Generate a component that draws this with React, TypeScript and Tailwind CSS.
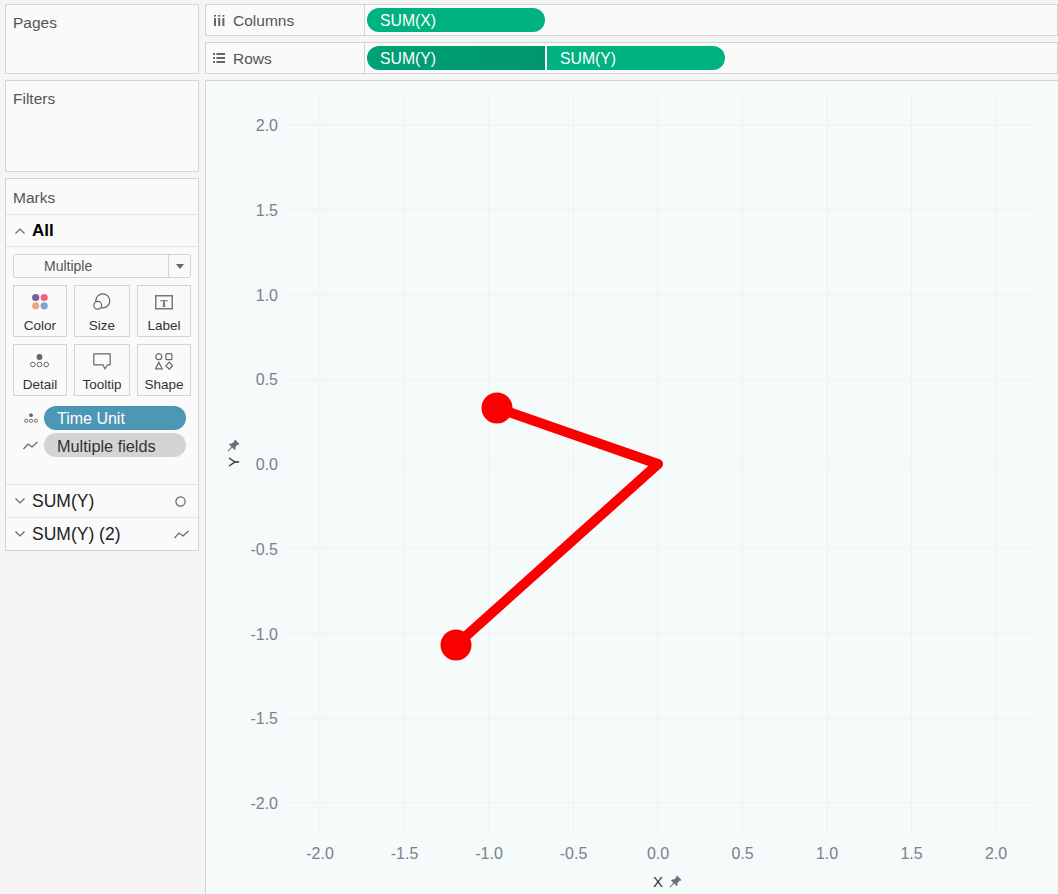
const font = "font-['Liberation_Sans',Arial,sans-serif]"

const xTicks = [-2, -1.5, -1, -0.5, 0, 0.5, 1, 1.5, 2]
const yTicks = [2, 1.5, 1, 0.5, 0, -0.5, -1, -1.5, -2]

function px(v: number) {
  return 658 + v * 169 - 206
}
function py(v: number) {
  return 464 - v * 169.5 - 81
}

function Pin({ className }: { className?: string }) {
  return (
    <svg className={className} width="13" height="13" viewBox="0 0 13 13">
      <path d="M8 0.5 L12.5 5 L11.6 5.8 L10.8 5.5 L8.4 8 L8.6 10.2 L7.6 11 L5.2 8.6 L1.2 12.4 L0.6 11.8 L4.4 7.8 L2 5.4 L2.8 4.4 L5 4.6 L7.5 2.2 L7.2 1.4 Z" fill="#68707c" />
    </svg>
  )
}

function Chevron({ up }: { up?: boolean }) {
  return (
    <svg width="10" height="6" viewBox="0 0 10 6" fill="none" stroke="#666" strokeWidth="1.2">
      <path d={up ? 'M0.5 5.5 L5 1 L9.5 5.5' : 'M0.5 0.5 L5 5 L9.5 0.5'} />
    </svg>
  )
}

function LineGlyph() {
  return (
    <svg width="15" height="9" viewBox="0 0 15 9" fill="none" stroke="#666" strokeWidth="1.2">
      <path d="M0.5 8 L5 3 L9 6 L14.5 1" />
    </svg>
  )
}

function MarkCard({ label, children }: { label: string; children: React.ReactNode }) {
  return (
    <div className="flex h-[52px] flex-col items-center border border-[#d4d4d4] bg-[#fafafa]">
      <div className="flex h-[29px] items-start justify-center pt-[7px]">{children}</div>
      <span className="mt-[3px] text-[13.5px] leading-[16px] text-[#333]">{label}</span>
    </div>
  )
}

function Shelf({ icon, label, children }: { icon: React.ReactNode; label: string; children: React.ReactNode }) {
  return (
    <div className="flex h-8 border border-[#d4d4d4] bg-[#fafafa]">
      <div className="flex w-[159px] items-center border-r border-[#d4d4d4]">
        <div className="flex w-[27px] justify-center pr-[1px]">{icon}</div>
        <span className="pt-[2px] text-[15.5px] text-[#555]">{label}</span>
      </div>
      <div className="flex items-center gap-[2px] pl-[2px]">{children}</div>
    </div>
  )
}

export default function App() {
  return (
    <div className={'flex h-[894px] w-[1058px] gap-[6px] overflow-hidden bg-[#f5f5f5] pl-[5px] pt-1 ' + font}>
      <div className="flex w-[194px] shrink-0 flex-col gap-[6px]">
        <div className="h-[70px] border border-[#d4d4d4] bg-[#fafafa] px-[7px] py-[9px] text-[15.5px] leading-[18px] text-[#555]">
          Pages
        </div>
        <div className="h-[92px] border border-[#d4d4d4] bg-[#fafafa] px-[7px] py-[9px] text-[15.5px] leading-[18px] text-[#555]">
          Filters
        </div>
        <div className="h-[373px] border border-[#d4d4d4] bg-[#fafafa]">
          <div className="flex h-[36px] items-center border-b border-[#e6e6e6] px-[7px] pt-[2px] text-[15.5px] text-[#555]">
            Marks
          </div>
          <div className="flex h-8 items-center border-b border-[#e6e6e6] pl-[9px]">
            <Chevron up />
            <span className="ml-[7px] text-[17px] font-bold text-black">All</span>
          </div>
          <div className="px-[7px] pt-[7px]">
            <div className="flex h-6 rounded-[2px] border border-[#d4d4d4] bg-[#fafafa]">
              <span className="flex-1 pl-[30px] text-[14px] leading-[22px] text-[#555]">Multiple</span>
              <div className="flex w-[22px] items-center justify-center border-l border-[#d4d4d4]">
                <div className="h-0 w-0 border-x-[4.5px] border-t-[5px] border-x-transparent border-t-[#666]" />
              </div>
            </div>
            <div className="mt-[7px] grid grid-cols-[54px_56px_54px] justify-between gap-y-[7px]">
              <MarkCard label="Color">
                <svg width="20" height="18" viewBox="0 0 20 18">
                  <circle cx="5.7" cy="4.5" r="3.6" fill="#7b5f96" />
                  <circle cx="14.2" cy="4.5" r="3.6" fill="#f1657f" />
                  <circle cx="5.7" cy="12.8" r="3.6" fill="#f2a57b" />
                  <circle cx="14.2" cy="12.8" r="3.6" fill="#7ba5d0" />
                </svg>
              </MarkCard>
              <MarkCard label="Size">
                <svg width="20" height="18" viewBox="0 0 20 18" fill="none" stroke="#666" strokeWidth="1.2">
                  <circle cx="10.8" cy="7.8" r="7" />
                  <circle cx="5.7" cy="12.2" r="3.9" fill="#fafafa" />
                </svg>
              </MarkCard>
              <MarkCard label="Label">
                <svg width="18" height="18" viewBox="0 0 18 18" fill="none">
                  <rect x="0.75" y="2.75" width="16.5" height="13" stroke="#777" strokeWidth="1.5" />
                  <text x="9" y="13.5" textAnchor="middle" fontSize="11" fontWeight="700" fontFamily="'Liberation Serif', serif" fill="#666">T</text>
                </svg>
              </MarkCard>
              <MarkCard label="Detail">
                <svg width="20" height="18" viewBox="0 0 20 18" fill="none" stroke="#666" strokeWidth="1">
                  <circle cx="9.5" cy="5" r="2.9" fill="#666" stroke="none" />
                  <circle cx="2.9" cy="12.5" r="2.3" />
                  <circle cx="9.5" cy="12.5" r="2.3" />
                  <circle cx="16.2" cy="12.5" r="2.3" />
                </svg>
              </MarkCard>
              <MarkCard label="Tooltip">
                <svg width="20" height="18" viewBox="0 0 20 18" fill="none" stroke="#666" strokeWidth="1.2">
                  <path d="M1.8 1.8 H18.2 V12.8 H15.5 L13 17 L11 12.8 H1.8 Z" strokeLinejoin="round" />
                </svg>
              </MarkCard>
              <MarkCard label="Shape">
                <svg width="18" height="18" viewBox="0 0 18 18" fill="none" stroke="#666" strokeWidth="1.2">
                  <circle cx="3.8" cy="4.7" r="3" />
                  <rect x="10.9" y="1.7" width="6" height="6" rx="1" />
                  <path d="M3.8 10.4 L7.2 16.8 H0.5 Z" />
                  <path d="M14.2 10.2 L17.6 13.7 L14.2 17.2 L10.8 13.7 Z" />
                </svg>
              </MarkCard>
            </div>
            <div className="mt-[10px] flex items-center">
              <div className="flex w-[31px] justify-center pl-[4px]">
                <svg width="14" height="10" viewBox="0 0 20 14" fill="none" stroke="#666" strokeWidth="1.3">
                  <circle cx="10" cy="3" r="2.7" fill="#666" stroke="none" />
                  <circle cx="3" cy="11" r="2.3" />
                  <circle cx="10" cy="11" r="2.3" />
                  <circle cx="17" cy="11" r="2.3" />
                </svg>
              </div>
              <div className="flex h-6 w-[142px] items-center rounded-full bg-[#4b97b4] pl-[13px] pt-[2px] text-[16px] text-white">
                Time Unit
              </div>
            </div>
            <div className="mt-[3px] flex items-center">
              <div className="flex w-[31px] justify-center pl-[4px]">
                <LineGlyph />
              </div>
              <div className="flex h-6 w-[142px] items-center rounded-full bg-[#d4d4d4] pl-[13px] pt-[2px] text-[16.3px] text-[#333]">
                Multiple fields
              </div>
            </div>
          </div>
          <div className="mt-[27px] flex h-[34px] items-center border-y border-[#e6e6e6] pl-[9px] pr-[12px]">
            <Chevron />
            <span className="ml-[7px] flex-1 text-[17.5px] text-[#222]">SUM(Y)</span>
            <svg width="11" height="11" viewBox="0 0 11 11" fill="none" stroke="#666" strokeWidth="1.2">
              <circle cx="5.5" cy="5.5" r="4.6" />
            </svg>
          </div>
          <div className="flex h-[32px] items-center pl-[9px] pr-[9px]">
            <Chevron />
            <span className="ml-[7px] flex-1 text-[17.5px] text-[#222]">SUM(Y) (2)</span>
            <LineGlyph />
          </div>
        </div>
      </div>

      <div className="flex min-w-0 flex-1 flex-col gap-[6px]">
        <Shelf
          label="Columns"
          icon={
            <svg width="11" height="11" viewBox="0 0 11 11" fill="#666">
              <rect x="0" y="0" width="2" height="1.6" />
              <rect x="4.2" y="0" width="2" height="1.6" />
              <rect x="8.4" y="0" width="2" height="1.6" />
              <rect x="0" y="3" width="2" height="8" />
              <rect x="4.2" y="3" width="2" height="8" />
              <rect x="8.4" y="3" width="2" height="8" />
            </svg>
          }
        >
          <div className="flex h-6 w-[178px] items-center rounded-full bg-[#00b27f] pl-[13px] pt-[2px] text-[15.75px] text-white">
            SUM(X)
          </div>
        </Shelf>
        <Shelf
          label="Rows"
          icon={
            <svg width="12" height="10" viewBox="0 0 12 10" fill="#666">
              <rect x="0" y="0" width="2" height="2" />
              <rect x="3.4" y="0" width="8.6" height="2" />
              <rect x="0" y="4" width="2" height="2" />
              <rect x="3.4" y="4" width="8.6" height="2" />
              <rect x="0" y="8" width="2" height="2" />
              <rect x="3.4" y="8" width="8.6" height="2" />
            </svg>
          }
        >
          <div className="flex h-6 w-[178px] items-center rounded-l-full bg-gradient-to-r from-[#00a176] to-[#00966c] pl-[13px] pt-[2px] text-[15.75px] text-white">
            SUM(Y)
          </div>
          <div className="flex h-6 w-[178px] items-center rounded-r-full bg-[#00b27f] pl-[13px] pt-[2px] text-[15.75px] text-white">
            SUM(Y)
          </div>
        </Shelf>
        <div className="relative min-h-0 flex-1 border-l border-t border-[#d4d4d4] bg-[#f5fafa]">
          <svg className="block" width="852" height="813" viewBox="0 0 852 813">
            {xTicks.map((t) => (
              <g key={t}>
                <line x1={px(t)} x2={px(t)} y1="11" y2="755" stroke="#eff1f3" />
                <text x={px(t)} y="778" textAnchor="middle" fontSize="16" fill="#7a8189">
                  {t.toFixed(1)}
                </text>
              </g>
            ))}
            {yTicks.map((t) => (
              <g key={t}>
                <line x1="77" x2="827" y1={py(t)} y2={py(t)} stroke="#eff1f3" />
                <text x="72" y={py(t) + 6} textAnchor="end" fontSize="16" fill="#7a8189">
                  {t.toFixed(1)}
                </text>
              </g>
            ))}
            <polyline
              points="291,327 452,383 250,564"
              fill="none"
              stroke="#fb0000"
              strokeWidth="10"
              strokeLinejoin="round"
              strokeLinecap="round"
            />
            <circle cx="291" cy="327" r="15.5" fill="#fb0000" />
            <circle cx="250" cy="564" r="15.5" fill="#fb0000" />
            <text x="452" y="806" textAnchor="middle" fontSize="15" fill="#333">X</text>
            <text transform="translate(33 381) rotate(-90)" textAnchor="middle" fontSize="15" fill="#333">Y</text>
          </svg>
          <Pin className="absolute left-[463px] top-[794px]" />
          <Pin className="absolute left-[21px] top-[358px]" />
        </div>
      </div>
    </div>
  )
}
